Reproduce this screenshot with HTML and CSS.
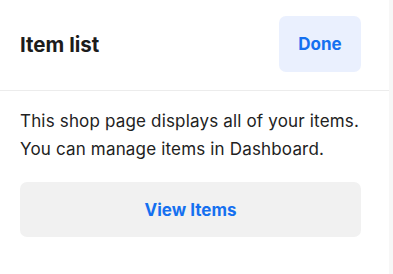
FILE: index.html
```html
<!DOCTYPE html>
<html>
<head>
<meta charset="utf-8">
<link rel="stylesheet" href="styles.css">
</head>
<body>
<div class="panel">
  <div class="header">
    <h1 class="title">Item list</h1>
    <button class="done">Done</button>
  </div>
  <div class="content">
    <p class="desc">This shop page displays all of your items.<br>You can manage items in Dashboard.</p>
    <button class="view">View Items</button>
  </div>
</div>
</body>
</html>
```

FILE: styles.css
```css
html, body {
  margin: 0;
  padding: 0;
  height: 100%;
  background: #f7f7f7;
  font-family: Inter, "Noto Sans", sans-serif;
}
.panel {
  width: 389px;
  height: 100%;
  background: #ffffff;
}
.header {
  height: 91px;
  box-sizing: border-box;
  display: flex;
  align-items: center;
  justify-content: space-between;
  padding: 0 28px 2px 20px;
  border-bottom: 1px solid #ececec;
}
.title {
  margin: 0;
  font-size: 20.5px;
  font-weight: 700;
  color: #1c1c1c;
}
.done {
  width: 82px;
  height: 56px;
  border: none;
  border-radius: 7px;
  background: #eaf0fe;
  color: #1570f0;
  font-family: inherit;
  font-size: 17px;
  font-weight: 700;
}
.content {
  padding: 16px 28px 0 20px;
}
.desc {
  margin: 0 0 19px;
  font-size: 17px;
  letter-spacing: 0.17px;
  line-height: 28px;
  white-space: nowrap;
  color: #222222;
}
.view {
  display: block;
  width: 100%;
  height: 55px;
  border: none;
  border-radius: 7px;
  background: #f1f1f1;
  color: #1570f0;
  font-family: inherit;
  font-size: 17px;
  font-weight: 700;
}
```
